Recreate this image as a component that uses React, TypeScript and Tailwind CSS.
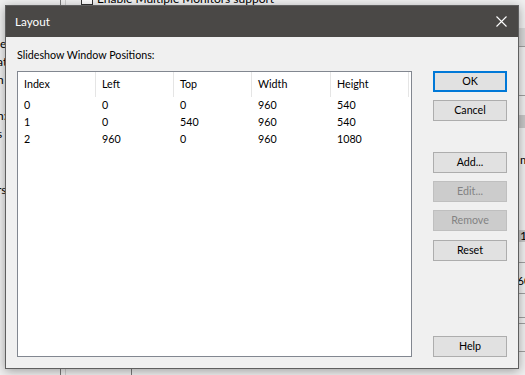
import React from "react";

const font = { fontFamily: 'Lato, "Noto Sans", sans-serif' };

const columns = [
  { name: "Index", w: "w-[78px]" },
  { name: "Left", w: "w-[78px]" },
  { name: "Top", w: "w-[78px]" },
  { name: "Width", w: "w-[79px]" },
  { name: "Height", w: "w-[78px]" },
];

const rows = [
  ["0", "0", "0", "960", "540"],
  ["1", "0", "540", "960", "540"],
  ["2", "960", "0", "960", "1080"],
];

function Btn({
  label,
  primary,
  disabled,
  className = "",
}: {
  label: string;
  primary?: boolean;
  disabled?: boolean;
  className?: string;
}) {
  let cls = "border border-[#adadad] bg-[#e1e1e1] text-black";
  if (primary) cls = "border-2 border-[#0078d7] bg-[#e1e1e1] text-black";
  if (disabled) cls = "border border-[#bfbfbf] bg-[#cccccc] text-[#838383]";
  return (
    <div
      className={`flex h-[21px] w-[74px] items-center justify-center text-[10.7px] leading-none ${cls} ${className}`}
    >
      {label}
    </div>
  );
}

// the window that sits behind the dialog
function Backdrop() {
  return (
    <div className="flex h-full w-full">
      <div className="flex w-[60px] flex-col overflow-hidden pt-[35px] text-[12px] leading-[18px] text-black">
        <div className="-ml-[3px]">ie</div>
        <div className="-ml-[3px]">at</div>
        <div className="-ml-[3px]">n</div>
        <div className="h-[18px]" />
        <div className="-ml-[3px]">n:</div>
        <div className="-ml-[3px]">s</div>
        <div className="-ml-[3px] mt-[38px]">rs</div>
      </div>
      <div className="w-[6px] border-l border-r border-l-[#7a7a7a] border-r-[#d0d0d0]" />
      <div className="flex flex-1 flex-col">
        <div className="-mt-[10px] flex items-center gap-[4px] pl-[15px] text-[12px]">
          <div className="h-[12px] w-[12px] border border-[#333] bg-white" />
          <span>Enable Multiple Monitors support</span>
        </div>
        <div className="flex-1" />
        <div className="flex h-[15px]">
          <div className="w-[65px]" />
          <div className="w-px bg-[#7a7a7a]" />
        </div>
      </div>
      <div className="flex w-[6px] flex-col text-[12px] leading-[14px]">
        <div className="mt-[28px] h-[19px] border-b border-[#a0a0a0] bg-[#d8d8d8]" />
        <div className="h-[49px] border-b border-[#a0a0a0]" />
        <div className="mt-[19px] h-[13px] bg-[#c8c8c8]" />
        <div className="mt-[25px] pl-px">m</div>
        <div className="mt-[63px] h-[12px] bg-[#c8c8c8] pl-px leading-[12px]">1.</div>
        <div className="h-[21px] border-b border-[#a0a0a0]" />
        <div className="-ml-[2px] mt-[11px]">60</div>
        <div className="h-[6px] border-b border-[#a0a0a0]" />
        <div className="h-[24px] border-b border-[#a0a0a0]" />
        <div className="h-[6px] border-b border-[#a0a0a0]" />
        <div className="h-[28px] border-b border-[#a0a0a0]" />
      </div>
    </div>
  );
}

export default function App() {
  return (
    <div
      className="relative h-[375px] w-[525px] overflow-hidden bg-[#f0f0f0] text-[10.7px]"
      style={font}
    >
      <Backdrop />

      {/* dialog */}
      <div className="absolute left-[5px] top-[5px] flex h-[364px] w-[514px] flex-col border border-[#5f5f5f] bg-[#f0f0f0] shadow-[0_2px_10px_rgba(0,0,0,0.35)]">
        <div className="flex h-[31px] shrink-0 items-center justify-between bg-[#4a4846] pl-[9px] pr-[11px] text-white">
          <span className="text-[11.7px]">Layout</span>
          <svg width="11" height="11" viewBox="0 0 11 11">
            <path d="M0.5 0.5 L10.5 10.5 M10.5 0.5 L0.5 10.5" stroke="#fff" strokeWidth="1.1" />
          </svg>
        </div>

        <div className="flex flex-1 pl-[11px]">
          <div className="flex flex-col">
            <div className="mt-[10px] h-[16px] leading-[16px]">Slideshow Window Positions:</div>
            <div className="mt-[8px] h-[286px] w-[395px] border border-[#828790] bg-white">
              <div className="flex h-[25px]">
                {columns.map((c) => (
                  <div
                    key={c.name}
                    className={`${c.w} flex h-full items-center border-r border-[#e5e5e5] pl-[6px]`}
                  >
                    {c.name}
                  </div>
                ))}
              </div>
              {rows.map((r, i) => (
                <div key={i} className="flex h-[17px] items-center">
                  {r.map((v, j) => (
                    <div key={j} className={`${columns[j].w} pl-[6px]`}>
                      {v}
                    </div>
                  ))}
                </div>
              ))}
            </div>
          </div>

          <div className="ml-[21px] flex flex-col gap-[8px] pt-[34px]">
            <Btn label="OK" primary />
            <Btn label="Cancel" />
            <Btn label="Add..." className="mt-[23px]" />
            <Btn label="Edit..." disabled />
            <Btn label="Remove" disabled />
            <Btn label="Reset" className="mt-px" />
            <Btn label="Help" className="mt-[67px]" />
          </div>
        </div>
      </div>
    </div>
  );
}
